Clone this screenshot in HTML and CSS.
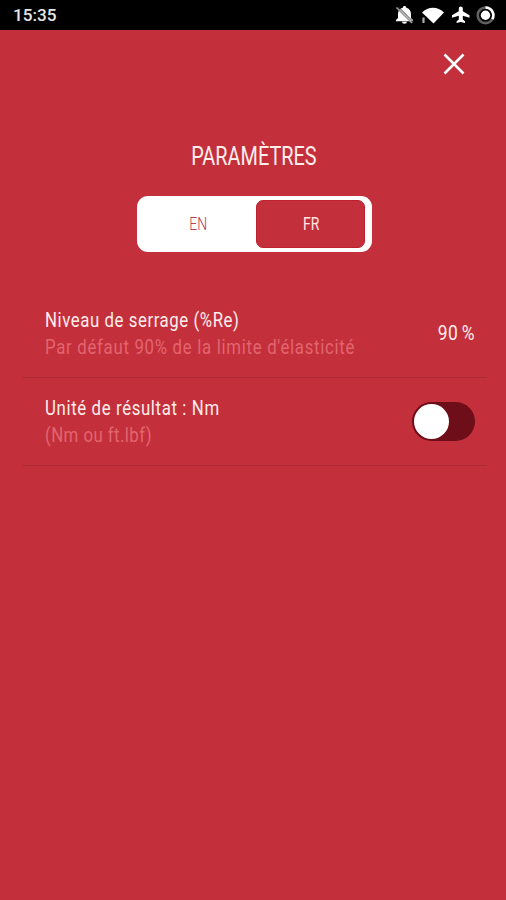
FILE: index.html
```html
<!DOCTYPE html>
<html lang="fr">
<head>
<meta charset="utf-8">
<title>Paramètres</title>
<link rel="stylesheet" href="styles.css">
</head>
<body>
<header class="status">
  <span class="clock">15:35</span>
  <svg class="status-icons" width="104" height="22" viewBox="394 5 104 22">
    <path fill="#fff" d="M404.500 6c1 0 1.700.7 1.700 1.700 3 .8 4.800 3 4.800 6v4.300l2 2v1.200H396v-1.200l2-2v-4.300c0-3 1.800-5.200 4.800-6 0-1 .7-1.700 1.700-1.700zM402 21.700h5a2.500 2 0 0 1-5 0z"/>
    <path stroke="#333" stroke-width="1" d="M398.500 7l15 15"/>
    <path stroke="#999" stroke-width="1.700" d="M396.500 7.500l15.500 15.500"/>
    <path fill="#fff" d="M422 12.500C428 6 438 6 444 12.500L433.500 23.500z"/>
    <path stroke="#000" stroke-width="4.500" d="M424 16.500v7.500"/>
    <path stroke="#aaa" stroke-width="2.200" d="M423.500 17.500v5.500"/>
    <path fill="#fff" d="M469.500 17.800v-2.500l-6.700-4V8.600a2 2 0 0 0-4 0v2.700l-6.800 4v2.500l6.800-2v3.700l-2.200 1.700v1.800l4.200-1 4.200 1v-1.800l-2.200-1.700v-3.700z"/>
    <circle cx="485.500" cy="15.300" r="7.800" fill="none" stroke="#606060" stroke-width="2.600"/>
    <path fill="none" stroke="#fff" stroke-width="2.600" d="M485.500 7.500a7.800 7.800 0 0 1 6.800 11.700"/>
    <circle cx="485.500" cy="15.300" r="4.700" fill="#fff"/>
  </svg>
</header>
<main class="screen">
  <div class="topbar">
    <svg class="close" width="22" height="22" viewBox="0 0 22 22"><path d="M1.500 1.500l19 19M20.500 1.500l-19 19"/></svg>
  </div>
  <h1 class="title"><span>PARAMÈTRES</span></h1>
  <div class="lang">
    <div class="option"><span>EN</span></div>
    <div class="option active"><span>FR</span></div>
  </div>
  <section class="rows">
    <div class="row">
      <div class="labels">
        <span class="name n1">Niveau de serrage (%Re)</span>
        <span class="hint h1">Par défaut 90% de la limite d'élasticité</span>
      </div>
      <span class="value">90 %</span>
    </div>
    <div class="row">
      <div class="labels">
        <span class="name n2">Unité de résultat : Nm</span>
        <span class="hint h2">(Nm ou ft.lbf)</span>
      </div>
      <div class="toggle"><div class="knob"></div></div>
    </div>
  </section>
</main>
</body>
</html>
```
FILE: styles.css
```css
* { box-sizing: border-box; }
body {
  margin: 0;
  width: 506px;
  height: 900px;
  overflow: hidden;
  background: #c42f3c;
  color: #fff;
  font-family: Roboto, "Liberation Sans", sans-serif;
}
.status {
  height: 30px;
  background: #000;
  display: flex;
  justify-content: space-between;
  padding: 5px 8px 0 13px;
}
.clock { font-size: 17.2px; line-height: 21px; font-weight: 500; color: #e6e6e6; }
.topbar { display: flex; justify-content: flex-end; padding: 23px 41px 0 0; height: 107px; }
.close path { stroke: #fff; stroke-width: 2.5; fill: none; }
.title {
  margin: 0;
  height: 40px;
  display: flex;
  justify-content: center;
  font-size: 25px;
  line-height: 40px;
  font-weight: 400;
  padding-left: 2px;
  color: #ffeeea;
}
.title span { transform: scaleX(.795); }
.lang {
  width: 235px;
  height: 56px;
  margin: 19px 0 0 137px;
  padding: 4px 7px 4px 5px;
  border-radius: 11px;
  background: #fff;
  display: flex;
  justify-content: space-between;
}
.option {
  width: 109px;
  border-radius: 7px;
  display: flex;
  align-items: center;
  justify-content: center;
  font-size: 17.5px;
  font-weight: 300;
  color: #b93e5d;
}
.option:first-child { width: 113px; }
.option span { transform: scaleX(.8); }
.option.active { background: #c42f3c; color: #ffe6e2; border: 1px solid #bf202d; font-weight: 400; padding-left: 2px; }
.rows { margin: 38px 19px 0 22px; }
.row {
  height: 88px;
  border-bottom: 1.5px solid #ad2a36;
  display: flex;
  justify-content: space-between;
  align-items: flex-start;
  padding: 17px 12px 0 23px;
}
.labels { display: flex; flex-direction: column; align-items: flex-start; min-width: 0; }
.name, .hint {
  font-size: 21px;
  line-height: 27px;
  white-space: nowrap;
  transform: scaleX(.8);
  transform-origin: left;
}
.name { font-weight: 400; letter-spacing: .7px; color: #ffeeea; }
.n2 { letter-spacing: .78px; }
.hint { font-weight: 400; color: #e2656e; }
.h1 { letter-spacing: .87px; }
.h2 { letter-spacing: .55px; }
.value {
  flex: none;
  white-space: nowrap;
  font-size: 21px;
  line-height: 27px;
  margin-top: 13px;
  letter-spacing: .7px;
  word-spacing: -2px;
  transform: scaleX(.83);
  transform-origin: right;
  color: #ffeeea;
}
.toggle { width: 63px; height: 39px; margin-top: 7px; padding: 2px; border-radius: 20px; background: #6d0e18; }
.knob { width: 35px; height: 35px; border-radius: 50%; background: #fff; }
```
